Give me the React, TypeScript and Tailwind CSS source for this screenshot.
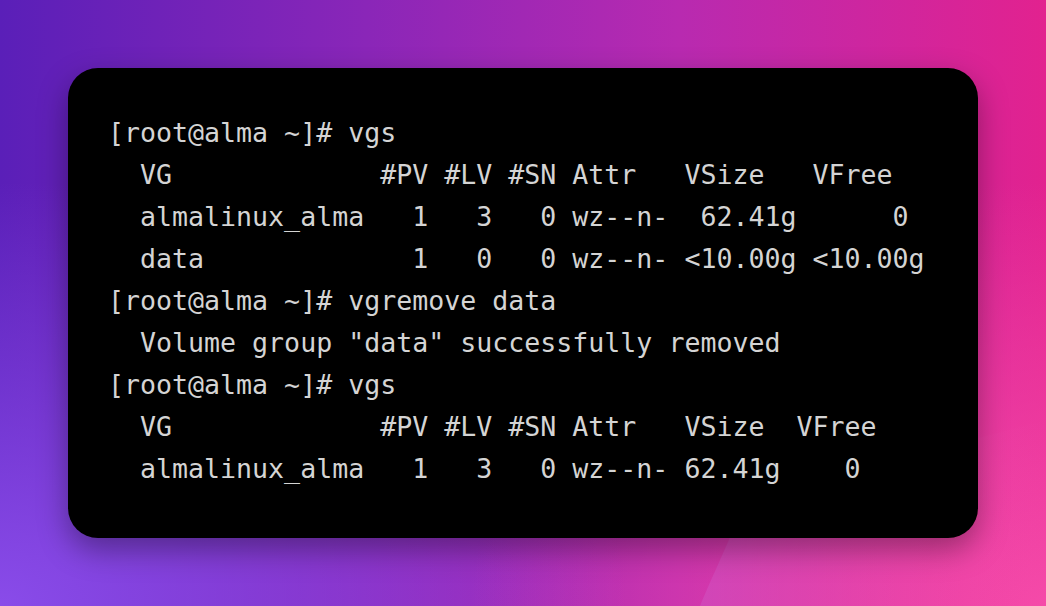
const lines = [
  "[root@alma ~]# vgs",
  "  VG             #PV #LV #SN Attr   VSize   VFree",
  "  almalinux_alma   1   3   0 wz--n-  62.41g      0",
  "  data             1   0   0 wz--n- <10.00g <10.00g",
  "[root@alma ~]# vgremove data",
  '  Volume group "data" successfully removed',
  "[root@alma ~]# vgs",
  "  VG             #PV #LV #SN Attr   VSize  VFree",
  "  almalinux_alma   1   3   0 wz--n- 62.41g    0",
];

function Backdrop() {
  return (
    <svg
      className="absolute inset-0 h-full w-full"
      viewBox="0 0 1046 606"
      preserveAspectRatio="none"
    >
      <defs>
        <linearGradient id="wedge" x1="0" y1="0" x2="1" y2="0">
          <stop offset="0" stopColor="#d050c0" stopOpacity="0.6" />
          <stop offset="1" stopColor="#f04aa8" stopOpacity="0" />
        </linearGradient>
      </defs>
      <path d="M700 606 C 715 570, 728 545, 745 500 L 1046 420 L 1046 606 Z" fill="url(#wedge)" />
    </svg>
  );
}

export default function App() {
  return (
    <div className="relative flex h-[606px] w-[1046px] items-center justify-center overflow-hidden bg-[linear-gradient(to_right,#5a1fb8_0%,#8a26b8_35%,#b82ab0_65%,#e2228f_100%)]">
      <div className="absolute inset-0 bg-[radial-gradient(ellipse_60%_70%_at_0%_100%,rgba(140,78,236,0.95)_0%,rgba(140,78,236,0)_100%)]" />
      <div className="absolute inset-0 bg-[radial-gradient(ellipse_55%_70%_at_100%_100%,rgba(246,76,170,0.95)_0%,rgba(246,76,170,0)_100%)]" />
      <Backdrop />
      <div className="relative h-[470px] w-[910px] rounded-[30px] bg-black pl-[40px] pt-[44px] shadow-[0_12px_30px_rgba(0,0,0,0.35)]">
        <pre className="font-['DejaVu_Sans_Mono','Liberation_Mono',monospace] text-[26.6px] leading-[42px] text-[#d4d4d4]">
          {lines.map((l, i) => (
            <div key={i}>{l}</div>
          ))}
        </pre>
      </div>
    </div>
  );
}
